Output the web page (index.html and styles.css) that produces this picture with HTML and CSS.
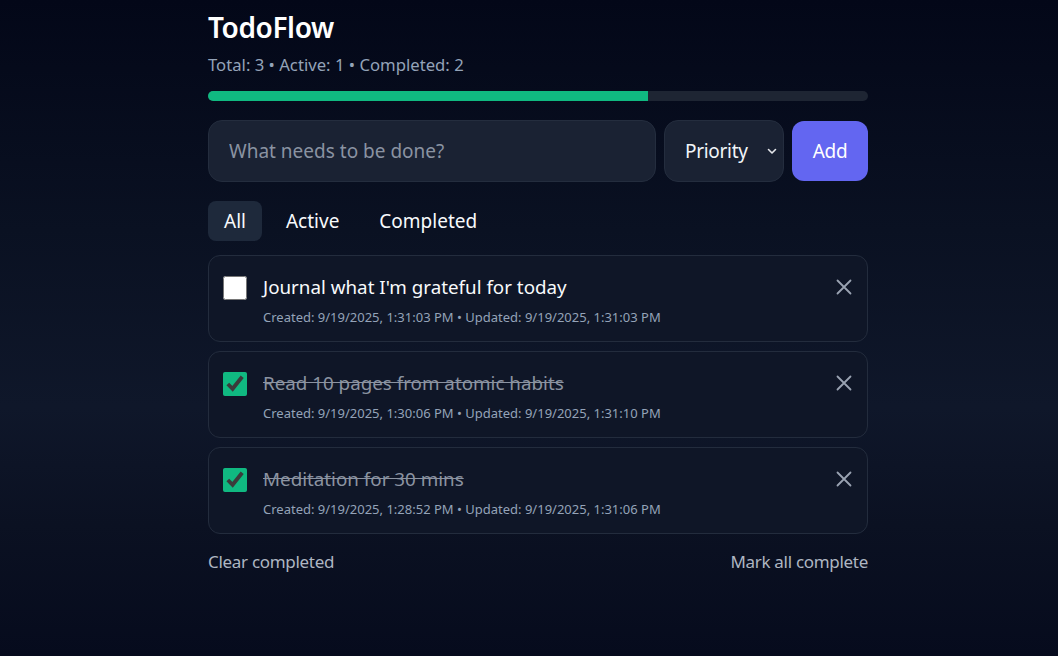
FILE: index.html
```html
<!DOCTYPE html>
<html lang="en">
<head>
<meta charset="utf-8">
<title>TodoFlow</title>
<link rel="stylesheet" href="styles.css">
</head>
<body>
<div class="page">
  <main class="app">
    <header class="head">
      <h1 class="title">TodoFlow</h1>
      <p class="stats">Total: 3 • Active: 1 • Completed: 2</p>
      <div class="progress"><div class="progress-fill" style="width: 66.67%"></div></div>
    </header>

    <form class="entry">
      <input class="entry-input" type="text" placeholder="What needs to be done?">
      <div class="select-wrap">
        <select class="entry-select">
          <option>Priority</option>
          <option>Low</option>
          <option>Medium</option>
          <option>High</option>
        </select>
        <svg class="chev" viewBox="0 0 12 12" width="12" height="12"><path d="M2.5 4.5 L6 8 L9.5 4.5" fill="none" stroke="#e5e7eb" stroke-width="1.6" stroke-linecap="round" stroke-linejoin="round"/></svg>
      </div>
      <button class="entry-add" type="button">Add</button>
    </form>

    <nav class="filters">
      <button class="filter is-active" type="button">All</button>
      <button class="filter" type="button">Active</button>
      <button class="filter" type="button">Completed</button>
    </nav>

    <ul class="list">
      <li class="item">
        <input class="check" type="checkbox">
        <div class="body">
          <div class="text">Journal what I'm grateful for today</div>
          <div class="meta">Created: 9/19/2025, 1:31:03 PM • Updated: 9/19/2025, 1:31:03 PM</div>
        </div>
        <button class="remove" type="button" aria-label="Delete"><svg viewBox="0 0 16 16" width="16" height="16"><path d="M1.5 1.5 L14.5 14.5 M14.5 1.5 L1.5 14.5" stroke="currentColor" stroke-width="1.8" stroke-linecap="round"/></svg></button>
      </li>
      <li class="item done">
        <input class="check" type="checkbox" checked>
        <div class="body">
          <div class="text">Read 10 pages from atomic habits</div>
          <div class="meta">Created: 9/19/2025, 1:30:06 PM • Updated: 9/19/2025, 1:31:10 PM</div>
        </div>
        <button class="remove" type="button" aria-label="Delete"><svg viewBox="0 0 16 16" width="16" height="16"><path d="M1.5 1.5 L14.5 14.5 M14.5 1.5 L1.5 14.5" stroke="currentColor" stroke-width="1.8" stroke-linecap="round"/></svg></button>
      </li>
      <li class="item done">
        <input class="check" type="checkbox" checked>
        <div class="body">
          <div class="text">Meditation for 30 mins</div>
          <div class="meta">Created: 9/19/2025, 1:28:52 PM • Updated: 9/19/2025, 1:31:06 PM</div>
        </div>
        <button class="remove" type="button" aria-label="Delete"><svg viewBox="0 0 16 16" width="16" height="16"><path d="M1.5 1.5 L14.5 14.5 M14.5 1.5 L1.5 14.5" stroke="currentColor" stroke-width="1.8" stroke-linecap="round"/></svg></button>
      </li>
    </ul>

    <footer class="foot">
      <button class="link" type="button">Clear completed</button>
      <button class="link" type="button">Mark all complete</button>
    </footer>
  </main>
</div>
</body>
</html>
```

FILE: styles.css
```css
* { box-sizing: border-box; }

html, body { margin: 0; }

body {
  min-height: 656px;
  background: linear-gradient(180deg, #030718 0%, #0a1122 35%, #0f172a 62%, #0b1122 80%, #060b1d 100%);
  color: #f8fafc;
  font-family: "Noto Sans", "Open Sans", sans-serif;
}

.page {
  display: flex;
  justify-content: center;
  padding-left: 18px;
}

.app {
  width: 660px;
  padding-top: 8px;
}

.title {
  margin: 0;
  font-size: 28px;
  line-height: 38px;
  font-weight: 600;
  color: #ffffff;
  letter-spacing: -0.4px;
}

.stats {
  margin: 7px 0 0;
  font-size: 16.7px;
  line-height: 24px;
  color: #94a3b8;
}

.progress {
  margin-top: 14px;
  height: 10px;
  border-radius: 5px;
  background: #1e2533;
  overflow: hidden;
}

.progress-fill {
  height: 100%;
  background: #10b981;
}

.entry {
  display: flex;
  gap: 8px;
  margin-top: 19px;
  align-items: center;
}

.entry-input {
  flex: 1;
  height: 62px;
  padding: 0 20px;
  border: 1px solid #242d3e;
  border-radius: 14px;
  background: #1a2233;
  color: #f1f5f9;
  font: inherit;
  font-size: 19px;
  outline: none;
}

.entry-input::placeholder { color: #8a93a2; }

.select-wrap {
  position: relative;
  width: 120px;
}

.entry-select {
  appearance: none;
  -webkit-appearance: none;
  width: 100%;
  height: 62px;
  padding: 0 20px;
  border: 1px solid #242d3e;
  border-radius: 14px;
  background: #1a2233;
  color: #f1f5f9;
  font: inherit;
  font-size: 19px;
  letter-spacing: -0.3px;
  outline: none;
}

.chev {
  position: absolute;
  right: 6px;
  top: 25px;
  pointer-events: none;
}

.entry-add {
  width: 76px;
  height: 60px;
  border: none;
  border-radius: 12px;
  background: #6366f1;
  color: #ffffff;
  font: inherit;
  font-size: 19px;
  letter-spacing: -0.3px;
}

.filters {
  display: flex;
  gap: 8px;
  margin-top: 19px;
}

.filter {
  height: 40px;
  padding: 0 16px;
  border: none;
  border-radius: 8px;
  background: transparent;
  color: #f8fafc;
  font: inherit;
  font-size: 19px;
}

.filter.is-active { background: #1e293b; }

.list {
  list-style: none;
  margin: 14px 0 0;
  padding: 0;
  display: flex;
  flex-direction: column;
  gap: 9px;
}

.item {
  display: flex;
  align-items: flex-start;
  gap: 16px;
  height: 87px;
  padding: 20px 15px 0 14px;
  border: 1px solid #232c3d;
  border-radius: 12px;
  background: #0f1627;
}

.check {
  width: 24px;
  height: 24px;
  margin: 0;
  flex: none;
  accent-color: #10b981;
}

.body {
  flex: 1;
  min-width: 0;
  margin-top: -2px;
}

.text {
  font-size: 18.8px;
  line-height: 26px;
  color: #f8fafc;
}

.done .text {
  color: #8b93a1;
  text-decoration: line-through;
}

.meta {
  margin-top: 8px;
  font-size: 13px;
  line-height: 18px;
  color: #94a3b8;
}

.remove {
  flex: none;
  width: 16px;
  height: 16px;
  margin-top: 3px;
  padding: 0;
  border: none;
  background: transparent;
  color: #9aa3b2;
  display: flex;
  align-items: center;
  justify-content: center;
}

.foot {
  display: flex;
  justify-content: space-between;
  margin-top: 16px;
}

.link {
  padding: 0;
  border: none;
  background: transparent;
  color: #aeb6c2;
  font: inherit;
  font-size: 17px;
  line-height: 24px;
  letter-spacing: -0.3px;
}
```
